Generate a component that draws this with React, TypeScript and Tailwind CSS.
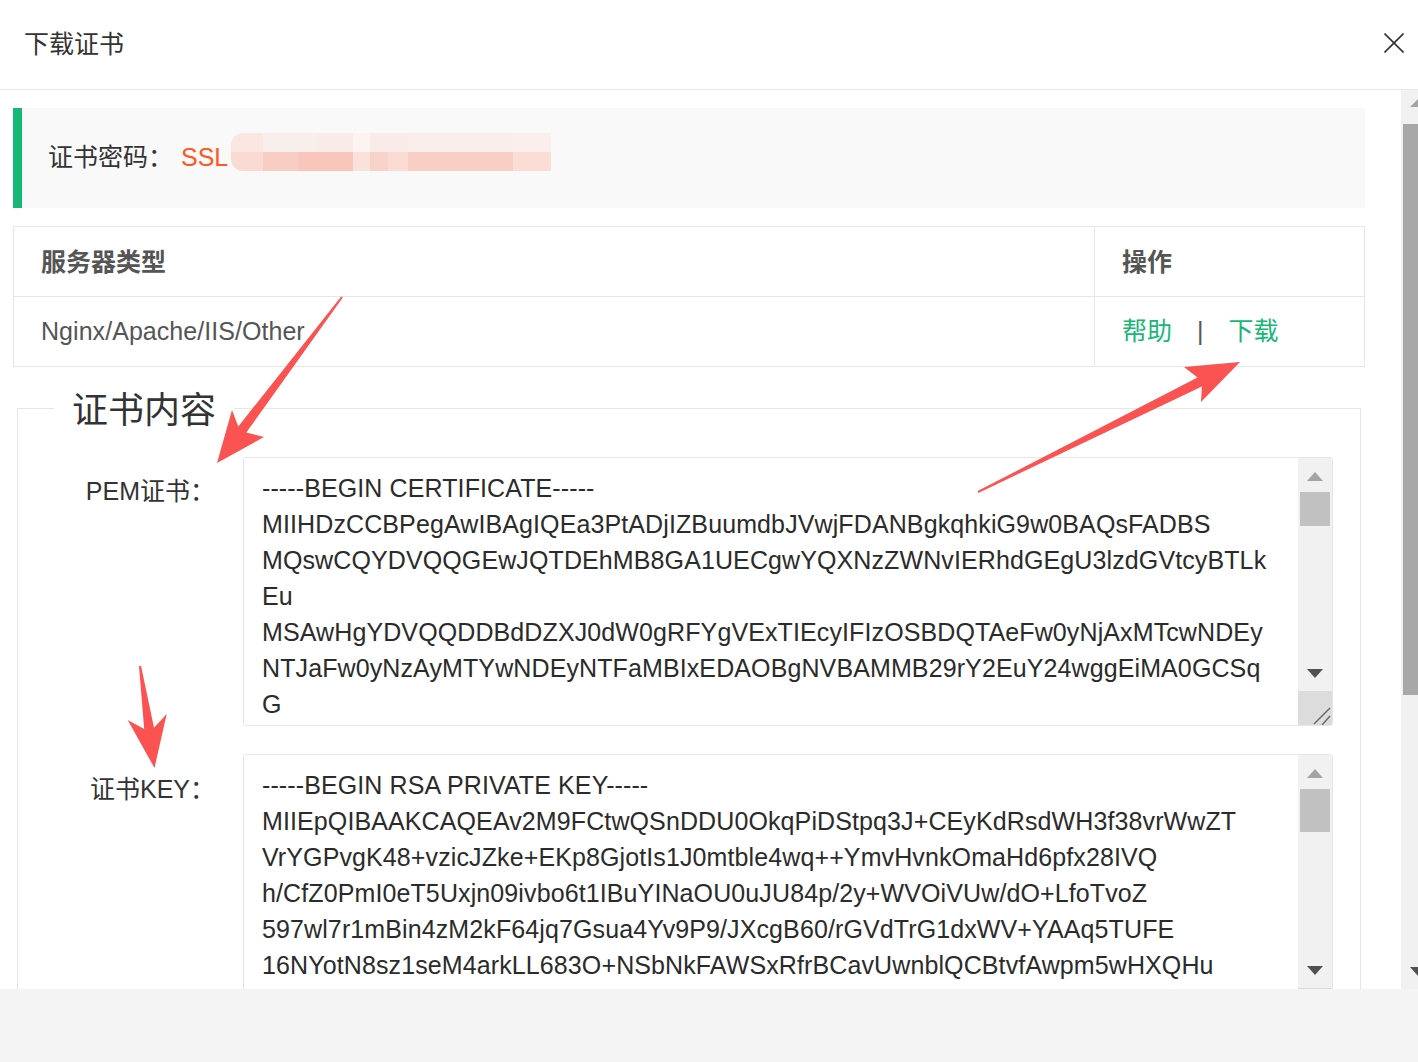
import React from "react";

const pem = [
  "-----BEGIN CERTIFICATE-----",
  "MIIHDzCCBPegAwIBAgIQEa3PtADjIZBuumdbJVwjFDANBgkqhkiG9w0BAQsFADBS",
  "MQswCQYDVQQGEwJQTDEhMB8GA1UECgwYQXNzZWNvIERhdGEgU3lzdGVtcyBTLk",
  "Eu",
  "MSAwHgYDVQQDDBdDZXJ0dW0gRFYgVExTIEcyIFIzOSBDQTAeFw0yNjAxMTcwNDEy",
  "NTJaFw0yNzAyMTYwNDEyNTFaMBIxEDAOBgNVBAMMB29rY2EuY24wggEiMA0GCSq",
  "G",
];

const key = [
  "-----BEGIN RSA PRIVATE KEY-----",
  "MIIEpQIBAAKCAQEAv2M9FCtwQSnDDU0OkqPiDStpq3J+CEyKdRsdWH3f38vrWwZT",
  "VrYGPvgK48+vzicJZke+EKp8GjotIs1J0mtble4wq++YmvHvnkOmaHd6pfx28IVQ",
  "h/CfZ0PmI0eT5Uxjn09ivbo6t1IBuYINaOU0uJU84p/2y+WVOiVUw/dO+LfoTvoZ",
  "597wl7r1mBin4zM2kF64jq7Gsua4Yv9P9/JXcgB60/rGVdTrG1dxWV+YAAq5TUFE",
  "16NYotN8sz1seM4arkLL683O+NSbNkFAWSxRfrBCavUwnblQCBtvfAwpm5wHXQHu",
];

function TaScroll({ thumb }: { thumb: string }) {
  return (
    <div className="w-[34px] shrink-0 bg-[#f1f1f1] flex flex-col">
      <div className="h-[34px] shrink-0 flex justify-center pt-[14px]">
        <svg width="16" height="9" className="block">
          <polygon points="8,0 16,9 0,9" fill="#a3a3a3" />
        </svg>
      </div>
      <div className={`mx-[2px] shrink-0 bg-[#c1c1c1] ${thumb}`} />
      <div className="flex-1" />
      <div className="h-[34px] shrink-0 flex justify-center pt-[12px]">
        <svg width="16" height="9" className="block">
          <polygon points="0,0 16,0 8,9" fill="#505050" />
        </svg>
      </div>
      <div className="h-[34px] shrink-0 bg-[#dcdcdc]">
        <svg width="34" height="34" className="block">
          <line x1="16" y1="33" x2="32" y2="17" stroke="#666" strokeWidth="1.4" />
          <line x1="24" y1="34" x2="32" y2="25" stroke="#666" strokeWidth="1.4" />
        </svg>
      </div>
    </div>
  );
}

function TextBox({ lines, thumb }: { lines: string[]; thumb: string }) {
  return (
    <div className="ml-[28px] flex-1 h-[269px] border border-[#e6e6e6] rounded-[3px] flex overflow-hidden bg-white">
      <div className="flex-1 min-w-0 overflow-hidden pl-[18px] pt-[12px] text-[25px] leading-[36px] tracking-[0.11px] text-[#2b2b2b]">
        {lines.map((l, i) => (
          <div key={i} className="whitespace-pre">
            {l}
          </div>
        ))}
      </div>
      <TaScroll thumb={thumb} />
    </div>
  );
}

function Blur() {
  return (
    <div className="inline-flex flex-col w-[320px] h-[38px] mb-[13px] ml-[3px] overflow-hidden rounded-l-[12px]">
      <div className="flex h-[19px]">
        <div className="w-[32px] bg-[#fbe6e1]" />
        <div className="w-[55px] bg-[#f8efec]" />
        <div className="w-[35px] bg-[#f9ece8]" />
        <div className="w-[17px] bg-[#fdf4f2]" />
        <div className="w-[38px] bg-[#f9ebe7]" />
        <div className="w-[105px] bg-[#faeeea]" />
        <div className="w-[38px] bg-[#fbefec]" />
      </div>
      <div className="flex h-[19px]">
        <div className="w-[32px] bg-[#fadbd4]" />
        <div className="w-[35px] bg-[#f8cdc3]" />
        <div className="w-[55px] bg-[#f8c6bb]" />
        <div className="w-[17px] bg-[#fbe1db]" />
        <div className="w-[18px] bg-[#f9d2c9]" />
        <div className="w-[20px] bg-[#fadcd5]" />
        <div className="w-[105px] bg-[#f9cec4]" />
        <div className="w-[38px] bg-[#fbddd6]" />
      </div>
    </div>
  );
}

export default function App() {
  return (
    <div className="relative w-[1418px] h-[1062px] overflow-hidden bg-white [font-family:'Liberation_Sans','Noto_Sans_CJK_SC',sans-serif]">
      {/* header */}
      <div className="h-[90px] border-b border-[#e8e8e8] flex items-center justify-between pl-[24px] pr-[14px]">
        <div className="text-[25px] text-[#333]">下载证书</div>
        <svg width="20" height="20" className="block -mt-[3px]">
          <line x1="0.5" y1="0.5" x2="19.5" y2="19.5" stroke="#333" strokeWidth="1.6" />
          <line x1="19.5" y1="0.5" x2="0.5" y2="19.5" stroke="#333" strokeWidth="1.6" />
        </svg>
      </div>

      {/* body */}
      <div className="flex h-[899px]">
        <div className="flex-1 min-w-0 overflow-hidden pl-[13px] pr-[36px] pt-[18px]">
          {/* password */}
          <div className="h-[100px] bg-[#f9f9f9] border-l-[9px] border-[#16b777] rounded-r-[3px] flex items-center pl-[26px] text-[25px]">
            <span className="text-[#333]">证书密码：</span>
            <span className="text-[#ff5722] ml-[8px]">SSL</span>
            <Blur />
          </div>

          {/* table */}
          <div className="mt-[18px] border border-[#e6e6e6] text-[25px]">
            <div className="flex h-[70px] border-b border-[#e6e6e6]">
              <div className="w-[1081px] border-r border-[#e6e6e6] pl-[27px] pt-[3px] flex items-center font-bold text-[#555]">
                服务器类型
              </div>
              <div className="flex-1 pl-[27px] pt-[3px] flex items-center font-bold text-[#555]">操作</div>
            </div>
            <div className="flex h-[69px]">
              <div className="w-[1081px] border-r border-[#e6e6e6] pl-[27px] pt-[1px] flex items-center text-[#555] tracking-[0.05px]">
                Nginx/Apache/IIS/Other
              </div>
              <div className="flex-1 pl-[27px] pt-[1px] flex items-center">
                <span className="text-[#16b777]">帮助</span>
                <span className="mx-[25px] text-[#555]">|</span>
                <span className="text-[#16b777]">下载</span>
              </div>
            </div>
          </div>

          {/* fieldset */}
          <fieldset className="mt-[19px] mx-[4px] border border-[#e6e6e6] pt-[27px] pr-[27px]">
            <legend className="ml-[36px] px-[18px] pt-[6px] text-[36px] leading-[38px] text-[#333]">证书内容</legend>
            <div className="flex">
              <div className="w-[197px] shrink-0 text-right pt-[16px] leading-[36px] text-[25px] text-[#333]">
                PEM证书：
              </div>
              <TextBox lines={pem} thumb="h-[34px]" />
            </div>
            <div className="flex mt-[28px]">
              <div className="w-[197px] shrink-0 text-right pt-[17px] leading-[36px] text-[25px] text-[#333]">
                证书KEY：
              </div>
              <TextBox lines={key} thumb="h-[43px]" />
            </div>
          </fieldset>
        </div>

        {/* outer scrollbar */}
        <div className="w-[17px] shrink-0 bg-[#f1f1f1] flex flex-col overflow-hidden">
          <svg width="17" height="34" className="block shrink-0">
            <polygon points="17,9 25,17 9,17" fill="#a3a3a3" />
          </svg>
          <div className="h-[571px] ml-[2px] shrink-0 bg-[#a8a8a8]" />
          <div className="flex-1" />
          <svg width="17" height="22" className="block shrink-0">
            <polygon points="9,0 25,0 17,9" fill="#505050" />
          </svg>
        </div>
      </div>

      {/* footer */}
      <div className="h-[73px] bg-[#f4f4f4]" />

      {/* annotation arrows */}
      <svg width="1418" height="1062" className="absolute inset-0 pointer-events-none">
        <polygon
          points="341.2,296.4 238.3,426.5 232,410 217,463 264,437 246.3,432.5 342.8,297.6"
          fill="#fb5252"
        />
        <polygon
          points="977.6,491.1 1197.5,377.5 1184,367 1240,362 1201,402 1201.9,386.5 978.4,492.9"
          fill="#fb5252"
        />
        <polygon
          points="139,666.15 144.2,729.1 127.7,720 154.5,768 166.7,714 154,727.7 141,665.85"
          fill="#fb5252"
        />
      </svg>
    </div>
  );
}
